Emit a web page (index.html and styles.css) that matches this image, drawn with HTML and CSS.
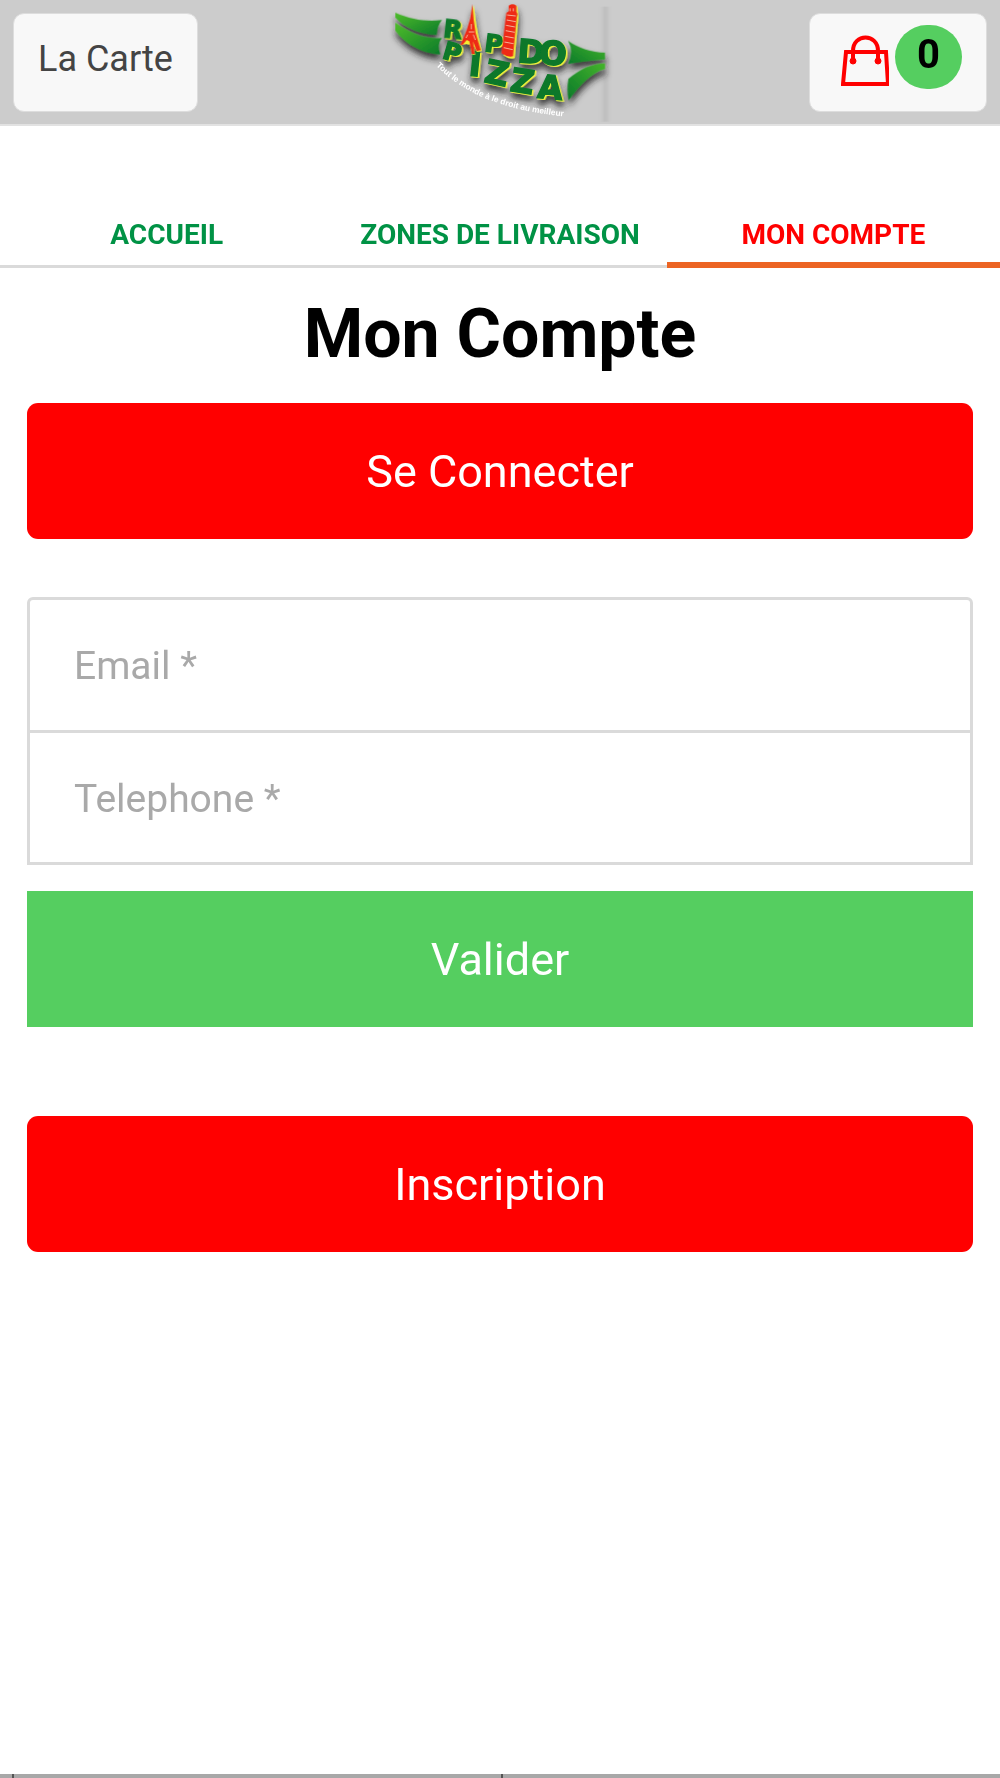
FILE: index.html
```html
<!DOCTYPE html>
<html lang="fr">
<head>
<meta charset="utf-8">
<meta name="viewport" content="width=device-width, initial-scale=1">
<title>Rapido Pizza - Mon Compte</title>
<link rel="stylesheet" href="styles.css">
</head>
<body>
<header class="topbar">
  <a class="topbar-button" href="#carte">La Carte</a>
  <a class="logo" href="#accueil" aria-label="Rapido Pizza">
    <svg viewBox="0 0 720 372" width="240" height="124" aria-hidden="true">
      <defs>
        <linearGradient id="leaf" x1="0" y1="0" x2="1" y2="1">
          <stop offset="0" stop-color="#4fbd2b"/>
          <stop offset="1" stop-color="#0b7a2b"/>
        </linearGradient>
        <linearGradient id="leaf-right" x1="1" y1="0" x2="0" y2="1">
          <stop offset="0" stop-color="#45b52b"/>
          <stop offset="1" stop-color="#0b7a2b"/>
        </linearGradient>
        <filter id="shade" x="-10%" y="-20%" width="120%" height="150%">
          <feDropShadow dx="2" dy="16" stdDeviation="10" flood-color="#222" flood-opacity="0.85"/>
        </filter>
        <filter id="soft" x="-200%" width="500%">
          <feGaussianBlur stdDeviation="6 2"/>
        </filter>
        <path id="slogan" d="M168 197C245 272 350 334 600 354"/>
      </defs>
      <rect class="edge" x="670" y="20" width="12" height="345" filter="url(#soft)"/>
      <g filter="url(#shade)">
        <path fill="url(#leaf)" d="M46 38C95 60 140 65 186 60Q171 78 170 105C115 103 70 80 46 53Z"/>
        <path fill="url(#leaf)" d="M46 68C95 103 140 118 186 114Q169 135 181 163C125 161 75 130 46 92Z"/>
        <path fill="url(#leaf-right)" d="M564 122C595 145 635 157 675 158V178C640 181 600 184 564 192Q583 155 564 122Z"/>
        <path fill="url(#leaf-right)" d="M675 190V207C632 219 600 255 566 301Q560 270 565 237C600 206 635 191 675 190Z"/>
        <g class="extrude">
          <text class="rapido" transform="translate(188 112) rotate(6)">R</text>
          <text class="rapido" transform="translate(311 154) rotate(7)">P</text>
          <text class="rapido large" transform="translate(410 187) rotate(4)">D</text>
          <text class="rapido large" transform="translate(476 193) rotate(2)">O</text>
          <text class="pizza small" transform="translate(184 174) rotate(16)">P</text>
          <text class="pizza" transform="translate(264 226) rotate(6)">I</text>
          <text class="pizza" transform="translate(309 245) rotate(12)">Z</text>
          <text class="pizza" transform="translate(387 272) rotate(9)">Z</text>
          <text class="pizza" transform="translate(470 293) rotate(5)">A</text>
        </g>
        <g class="towers">
          <path class="glow" d="M281 14L288 70L294 105L305 153L291 156L280 137L286 164H277L270 134L259 132L244 134L264 88L274 55Z"/>
          <path class="tower" d="M277 12L281 60L287 99L302 151L290 153L279 124L284 162H276L268 124L260 120L248 134H242L261 88L271 55Z"/>
          <path class="gap" d="M274 72V88M266 96H283M263 104L258 114M280 104L286 120"/>
          <path class="glow" d="M389 18Q402 10 412 20L415 50L404 174Q388 180 371 166L382 55Z"/>
          <path class="tower" d="M386 17Q398 9 409 17V35L412 42L410 53L399 169Q382 173 365 160L377 53L379 39L386 34Z"/>
          <path class="gap" d="M390 25V34M400 25V34M381 45L407 48M380 60L407 65M378 76L405 81M377 92L404 97M375 109L402 114M373 126L400 131M371 143L398 149"/>
        </g>
      </g>
      <text class="slogan"><textPath href="#slogan">Tout le monde à le droit au meilleur</textPath></text>
    </svg>
  </a>
  <a class="topbar-button cart" href="#panier" aria-label="Panier">
    <svg class="bag" viewBox="0 0 48 52" width="48" height="52" aria-hidden="true">
      <path d="M5 17H45L47 49H2Z"/>
      <path d="M12 26V16C12 -2 37 -2 37 16V26"/>
      <circle cx="12" cy="26" r="3"/>
      <circle cx="37" cy="26" r="3"/>
    </svg>
    <span class="cart-count">0</span>
  </a>
</header>

<nav class="tabs">
  <a class="tab" href="#accueil">ACCUEIL</a>
  <a class="tab" href="#zones">ZONES DE LIVRAISON</a>
  <a class="tab active" href="#compte" aria-current="page">MON COMPTE</a>
</nav>

<main class="account">
  <h1 class="title">Mon Compte</h1>
  <button class="button rounded" type="button">Se Connecter</button>
  <form class="login">
    <div class="fields">
      <input class="field" type="email" name="email" placeholder="Email *" aria-label="Email" required>
      <input class="field" type="tel" name="telephone" placeholder="Telephone *" aria-label="Telephone" required>
    </div>
    <button class="button submit" type="submit">Valider</button>
  </form>
  <button class="button rounded" type="button">Inscription</button>
</main>

<footer class="footer">
  <div class="footer-cell"></div>
  <div class="footer-cell"></div>
</footer>
</body>
</html>
```
FILE: styles.css
```css
* {
  box-sizing: border-box;
}

body {
  margin: 0;
  min-height: 100vh;
  display: flex;
  flex-direction: column;
  background: #fff;
  color: #000;
  font-family: Roboto, "Liberation Sans", sans-serif;
}

a {
  text-decoration: none;
}

.topbar {
  display: grid;
  grid-template-columns: 1fr auto 1fr;
  align-items: center;
  padding: 0 13px;
  background: #ccc;
  border-bottom: 2px solid #e2e2e2;
}

.topbar-button {
  justify-self: start;
  height: 99px;
  padding: 0 24px;
  border: 1px solid #ddd;
  border-radius: 11px;
  background: #f8f8f8;
  color: #444;
  font-size: 36px;
  line-height: 90px;
}

.cart {
  justify-self: end;
  display: flex;
  align-items: flex-start;
  gap: 6px;
  padding: 11px 24px 0 31px;
}

.bag {
  margin-top: 10px;
  fill: none;
  stroke: #f00;
  stroke-width: 4;
}

.bag circle {
  fill: #f00;
  stroke-width: 1;
}

.cart-count {
  width: 67px;
  height: 64px;
  border-radius: 32px;
  background: #55ce60;
  color: #000;
  font-size: 40px;
  font-weight: 700;
  line-height: 60px;
  text-align: center;
}

.logo svg {
  display: block;
}

.edge {
  fill: #b0b0b0;
  opacity: 0.7;
}

.extrude {
  fill: #08782c;
  stroke: #08782c;
  stroke-width: 4;
  filter: drop-shadow(4px 3px 0 #eef23a);
  font-family: "DejaVu Sans", sans-serif;
  font-weight: 700;
}

.rapido {
  font-size: 74px;
}

.rapido.large {
  font-size: 98px;
}

.pizza {
  font-size: 98px;
}

.pizza.small {
  font-size: 74px;
}

.glow {
  fill: #f3ec35;
}

.tower {
  fill: #ee2a18;
}

.gap {
  fill: none;
  stroke: #f4b49a;
  stroke-width: 3;
}

.slogan {
  fill: #fff;
  font-family: "Liberation Sans Narrow", "Liberation Sans", sans-serif;
  font-size: 25px;
  font-weight: 700;
}

.tabs {
  display: grid;
  grid-template-columns: repeat(3, 1fr);
  padding-top: 74px;
}

.tab {
  padding: 18px 0 14px;
  border-bottom: 3px solid #dadada;
  color: #009245;
  font-size: 28px;
  font-weight: 700;
  line-height: 33px;
  text-align: center;
}

.tab.active {
  padding-bottom: 11px;
  border-bottom: 6px solid #ec6423;
  color: #f00;
}

.account {
  flex: 1;
  display: flex;
  flex-direction: column;
  padding: 0 27px;
}

.title {
  margin: 25px 0 28px;
  font-size: 68px;
  font-weight: 700;
  line-height: 82px;
  text-align: center;
}

.button {
  width: 100%;
  height: 136px;
  padding: 0;
  border: 0;
  background: #f00;
  color: #fff;
  font-family: inherit;
  font-size: 45px;
}

.rounded {
  border-radius: 11px;
}

.login {
  margin: 58px 0 89px;
}

.fields {
  margin-bottom: 26px;
  border: 3px solid #dadada;
  border-radius: 6px 6px 0 0;
}

.field {
  display: block;
  width: 100%;
  height: 130px;
  padding: 2px 44px 0;
  border: 0;
  background: transparent;
  color: #444;
  font-family: inherit;
  font-size: 39px;
}

.field + .field {
  height: 132px;
  border-top: 3px solid #dadada;
}

.field::placeholder {
  color: #a9a9a9;
  opacity: 1;
}

.submit {
  background: #55ce60;
}

.footer {
  display: grid;
  grid-template-columns: 1fr 1fr;
  height: 4px;
  padding: 0 10px 0 12px;
  background: #a8a8a8;
}

.footer-cell {
  border-left: 2px solid #555;
}
```
